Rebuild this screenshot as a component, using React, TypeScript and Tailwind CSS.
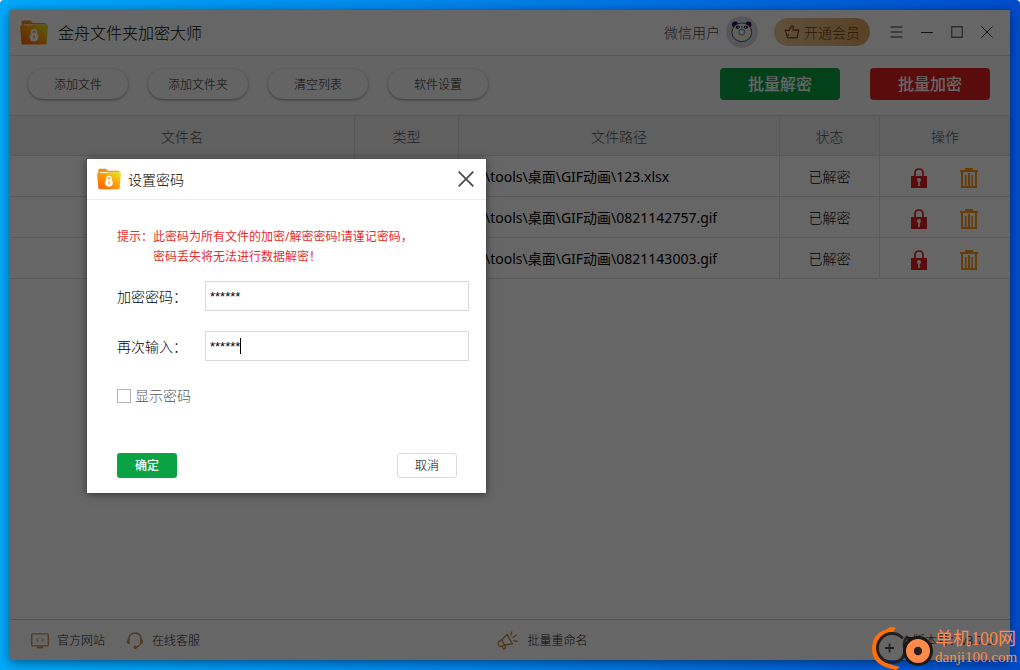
import { useState } from "react";
import type { ReactNode } from "react";

const files = [
  "D:\\tools\\桌面\\GIF动画\\123.xlsx",
  "D:\\tools\\桌面\\GIF动画\\0821142757.gif",
  "D:\\tools\\桌面\\GIF动画\\0821143003.gif",
];

function FolderLogo({ className, id }: { className: string; id: string }) {
  return (
    <svg viewBox="0 0 28 25" className={className} aria-hidden="true">
      <defs>
        <linearGradient id={id} x1="0" y1="1" x2="1" y2="0">
          <stop offset="0" stopColor="#ff5a00" />
          <stop offset="0.5" stopColor="#ff9a0a" />
          <stop offset="1" stopColor="#e0ee20" />
        </linearGradient>
      </defs>
      <path d="M1.5 2 Q1.5 0.5 3 0.5 H10.5 L13 3 H24.5 Q26 3 26 4.5 V9 H1.5 Z" fill="#f08c1c" />
      <path d="M3.5 4.2 H24.5 V8 H3.5 Z" fill="#fff1cc" />
      <path d="M0.1 6.8 Q0 5.5 1.3 5.5 H11 L13.5 4.5 H26.6 Q28 4.5 27.9 6 L26.6 22.8 Q26.4 24.5 25 24.5 H3 Q1.6 24.5 1.5 22.8 Z" fill={`url(#${id})`} />
      <path d="M11.6 14 V12 Q11.6 9.6 14 9.6 Q16.4 9.6 16.4 12 V14" fill="none" stroke="#fff" strokeWidth="1.6" />
      <ellipse cx="14" cy="17" rx="4.4" ry="4.5" fill="#fff" />
      <circle cx="14" cy="16.2" r="0.9" fill="#ff9a0a" />
      <path d="M13.5 16 H14.5 V18.6 H13.5 Z" fill="#ff9a0a" />
    </svg>
  );
}

function Panda() {
  return (
    <svg viewBox="0 0 32 32" className="size-8" aria-hidden="true">
      <circle cx="16" cy="16" r="15.8" fill="#f3c8ce" />
      <circle cx="16" cy="16" r="14.2" fill="#c8e0ec" />
      <circle cx="9" cy="8.5" r="3" fill="#22164a" />
      <circle cx="22.5" cy="8.5" r="3" fill="#22164a" />
      <ellipse cx="15.8" cy="16.3" rx="9.9" ry="9.3" fill="#f8f0e0" stroke="#5a5064" strokeWidth="1" />
      <ellipse cx="11.8" cy="11.2" rx="2.1" ry="1.8" fill="#22164a" />
      <ellipse cx="19.8" cy="11.2" rx="2.1" ry="1.8" fill="#22164a" />
      <circle cx="12.1" cy="11.2" r="0.6" fill="#fff" />
      <circle cx="19.5" cy="11.2" r="0.6" fill="#fff" />
      <circle cx="15.8" cy="16" r="2.8" fill="#fff" stroke="#86a4c4" strokeWidth="1.4" />
      <path d="M14.6 10.4 H17 L15.8 12 Z" fill="#22164a" />
    </svg>
  );
}

function LockIcon() {
  return (
    <svg viewBox="0 0 16 20" className="h-5 w-4" aria-hidden="true">
      <path d="M4 9 V5 Q4 1 8 1 Q12 1 12 5 V9" fill="none" stroke="#e02020" strokeWidth="1.7" />
      <path d="M0 8 H16 V20 H0 Z" fill="#e02020" />
      <circle cx="8" cy="12" r="2" fill="#fff" />
      <path d="M7.2 12 H8.8 V18 H7.2 Z" fill="#fff" />
    </svg>
  );
}

function TrashIcon() {
  return (
    <svg viewBox="0 0 18 20" className="h-5 w-[18px]" aria-hidden="true" fill="#ff9a14">
      <path d="M5 0 H13 V2 H18 V4 H0 V2 H5 Z" />
      <path d="M1 4 H3 V18 H15 V4 H17 V20 H1 Z" />
      <path d="M5 7 H6.6 V18 H5 Z M8 5 H10 V18 H8 Z M11.4 7 H13 V18 H11.4 Z" />
    </svg>
  );
}

function ToolButton({ children }: { children: ReactNode }) {
  return (
    <button className="h-[30px] w-[100px] rounded-full bg-[#f9f9f9] pt-0.5 text-[12px] text-[#222] shadow-[0_1px_3px_rgba(0,0,0,0.4)]">
      {children}
    </button>
  );
}

function TitleBar() {
  return (
    <header className="flex h-[46px] shrink-0 items-center border-b border-[#dedede] bg-white pr-[17px] pb-px pl-2.5">
      <FolderLogo id="logoMain" className="h-[25px] w-7" />
      <h1 className="ml-2.5 pt-0.5 text-[16px] leading-6 text-black">金舟文件夹加密大师</h1>
      <div className="ml-auto flex items-center">
        <span className="text-[14px] text-[#444]">微信用户</span>
        <span className="ml-1.5">
          <Panda />
        </span>
        <button className="ml-4 flex h-7 w-24 items-center justify-center gap-1 rounded-full bg-linear-to-r from-[#edc998] to-[#dba45c] text-[14px] text-[#6b3d0a]">
          <svg viewBox="0 0 16 14" className="h-3.5 w-4" fill="none" stroke="#7a4408" strokeWidth="1.2" strokeLinejoin="round" aria-hidden="true">
            <path d="M3.6 12.8 L1.2 5 L5 5.6 L7.6 1 Q9.2 0.8 9.4 2.2 L9 5.2 L14.8 4.8 L13 12.8 Z" />
            <path d="M4.2 9.2 L5 10.8" />
          </svg>
          开通会员
        </button>
        <div className="ml-5 flex items-center gap-[18px] text-[#777]">
          <button aria-label="菜单">
            <svg viewBox="0 0 13 12" className="h-3 w-[13px]" stroke="currentColor" strokeWidth="1.4" aria-hidden="true">
              <path d="M0.5 1 H12.5 M0.5 6 H12.5 M0.5 11 H12.5" />
            </svg>
          </button>
          <button aria-label="最小化" className="text-[#333]">
            <svg viewBox="0 0 12 12" className="size-3" stroke="currentColor" aria-hidden="true">
              <path d="M0 6.5 H12" />
            </svg>
          </button>
          <button aria-label="最大化">
            <svg viewBox="0 0 12 12" className="size-3" fill="none" stroke="currentColor" strokeWidth="1.4" aria-hidden="true">
              <path d="M0.7 0.7 H11.3 V11.3 H0.7 Z" />
            </svg>
          </button>
          <button aria-label="关闭" className="text-[#333]">
            <svg viewBox="0 0 12 12" className="size-3" stroke="currentColor" strokeWidth="1" aria-hidden="true">
              <path d="M0.5 0.5 L11.5 11.5 M11.5 0.5 L0.5 11.5" />
            </svg>
          </button>
        </div>
      </div>
    </header>
  );
}

function Toolbar() {
  return (
    <div className="flex h-[59px] shrink-0 items-center bg-[#f9f9f9] pr-5 pb-[3px] pl-[18px]">
      <div className="flex gap-5">
        <ToolButton>添加文件</ToolButton>
        <ToolButton>添加文件夹</ToolButton>
        <ToolButton>清空列表</ToolButton>
        <ToolButton>软件设置</ToolButton>
      </div>
      <div className="ml-auto flex gap-[30px] text-[16px] font-medium text-white">
        <button className="h-8 w-[120px] rounded bg-[#0aa344]">批量解密</button>
        <button className="h-8 w-[120px] rounded bg-[#e02020]">批量加密</button>
      </div>
    </div>
  );
}

function FileTable() {
  const head = "border-[#dcdcdc] border-r pt-0.5 font-light last:border-r-0";
  const cell = "border-r border-b border-[#e2e2e2] p-0";
  return (
    <table className="w-full table-fixed border-separate border-spacing-0 text-[14px]">
      <colgroup>
        <col />
        <col className="w-[104px]" />
        <col className="w-[321px]" />
        <col className="w-[100px]" />
        <col className="w-[130px]" />
      </colgroup>
      <thead>
        <tr className="h-[41px] bg-[#efefef] text-[#555] [&>th]:border-y">
          <th className={head}>文件名</th>
          <th className={head}>类型</th>
          <th className={head}>文件路径</th>
          <th className={head}>状态</th>
          <th className={head}>操作</th>
        </tr>
      </thead>
      <tbody className="text-black">
        {files.map((path) => (
          <tr key={path} className="h-[41px]">
            <td className={cell} />
            <td className={cell} />
            <td className={`${cell} pl-3 font-normal whitespace-nowrap`}>{path}</td>
            <td className={`${cell} text-center`}>已解密</td>
            <td className="border-b border-[#e2e2e2] p-0">
              <div className="flex items-center justify-center gap-[33px] pt-1 pr-0.5">
                <button aria-label="加密">
                  <LockIcon />
                </button>
                <button aria-label="删除">
                  <TrashIcon />
                </button>
              </div>
            </td>
          </tr>
        ))}
      </tbody>
    </table>
  );
}

function Footer() {
  return (
    <footer className="flex h-[41px] shrink-0 items-center border-t border-[#d0d0d0] pt-px pr-[17px] pl-[21px] text-[12px] text-[#222]">
      <div className="flex flex-1 gap-[21px]">
        <a href="#site" className="flex items-center gap-2">
          <svg viewBox="0 0 18 16" className="h-4 w-[18px]" fill="none" stroke="#c8904c" strokeWidth="1.4" aria-hidden="true">
            <rect x="0.7" y="0.9" width="16.6" height="12" rx="1.4" />
            <path d="M7.5 4.8 L5.6 6.9 L7.5 9 M10.5 4.8 L12.4 6.9 L10.5 9" strokeWidth="1" />
            <path d="M6 14.4 H12" strokeWidth="2.2" />
          </svg>
          官方网站
        </a>
        <a href="#service" className="flex items-center gap-2">
          <svg viewBox="0 0 18 17" className="h-[17px] w-[18px]" aria-hidden="true">
            <path d="M2.8 8 Q2.8 1 9 1 Q15.2 1 15.2 8 Q15.2 14 10.5 15" fill="none" stroke="#c8904c" strokeWidth="1.3" />
            <path d="M3.7 6.8 V12.2 Q0.8 12 0.8 9.5 Q0.8 7 3.7 6.8 Z M14.3 6.8 V12.2 Q17.2 12 17.2 9.5 Q17.2 7 14.3 6.8 Z" fill="#c8904c" />
            <circle cx="9.3" cy="15.2" r="1.7" fill="#c8904c" />
          </svg>
          在线客服
        </a>
      </div>
      <a href="#rename" className="flex items-center gap-2.5 pl-[60px]">
        <svg viewBox="0 0 21 19" className="h-[19px] w-[21px]" fill="none" stroke="#c8904c" strokeWidth="1.4" strokeLinejoin="round" strokeLinecap="round" aria-hidden="true">
          <path d="M1.2 11.4 L5 8.6 L10 3.4 L15.4 12.8 L8 14 L3.4 15.6 Q0.8 14.4 1.2 11.4 Z" />
          <path d="M4.6 8.8 L7.6 14 M5 15.2 L6.4 18 L8.6 17.2 L7.6 14.4" />
          <path d="M13.8 4 L14.8 1 M16 6.6 L19.2 4 M17 9.8 L20.2 10.2" />
        </svg>
        批量重命名
      </a>
      <span className="flex-1 text-right">版本号：v3.7.0</span>
    </footer>
  );
}

function PasswordDialog() {
  const [first, setFirst] = useState("******");
  const [second, setSecond] = useState("******");
  const [show, setShow] = useState(false);
  const field =
    "h-[30px] w-full border border-[#d9d9d9] bg-white px-1 font-['Liberation_Sans',sans-serif] text-[13px] text-black outline-none";
  return (
    <section
      role="dialog"
      aria-labelledby="dialogTitle"
      className="absolute top-[149px] left-[77px] w-[399px] bg-white pb-[15px] shadow-[0_1px_8px_rgba(0,0,0,0.5)]"
    >
      <div className="flex h-[41px] items-center border-b border-[#ebebeb] pr-3 pl-2.5">
        <FolderLogo id="logoDialog" className="h-[22px] w-6" />
        <h2 id="dialogTitle" className="ml-[7px] text-[14px] text-black">
          设置密码
        </h2>
        <button aria-label="关闭" className="ml-auto">
          <svg viewBox="0 0 16 16" className="size-4" stroke="#4c4c4c" strokeWidth="1.8" aria-hidden="true">
            <path d="M0.7 0.7 L15.3 15.3 M15.3 0.7 L0.7 15.3" />
          </svg>
        </button>
      </div>
      <form className="pt-[27px] pr-[29px] pl-[30px]" onSubmit={(e) => e.preventDefault()}>
        <div className="flex text-[12px] leading-5 font-normal text-[#e62e2e]">
          <span className="w-9 shrink-0">提示：</span>
          <p>
            此密码为所有文件的加密/解密密码!请谨记密码，
            <br />
            密码丢失将无法进行数据解密！
          </p>
        </div>
        <div className="-mr-3 mt-3.5 grid grid-cols-[88px_1fr] items-center gap-y-5 text-[14px] text-black">
          <label htmlFor="pwd">加密密码：</label>
          <input id="pwd" className={field} value={first} onChange={(e) => setFirst(e.target.value)} />
          <label htmlFor="pwdAgain">再次输入：</label>
          <div className="relative">
            <input id="pwdAgain" className={field} value={second} onChange={(e) => setSecond(e.target.value)} />
            <span className="absolute top-[7px] left-[35px] h-4 w-px bg-black" />
          </div>
        </div>
        <label className="mt-[25px] flex items-center gap-1 text-[14px] leading-5 text-[#555]">
          <input
            type="checkbox"
            checked={show}
            onChange={(e) => setShow(e.target.checked)}
            className="size-3.5 appearance-none border border-[#b4b4b4] bg-white checked:bg-[#0aa344]"
          />
          显示密码
        </label>
        <div className="mt-[47px] flex justify-between text-[12px]">
          <button type="submit" className="h-[25px] w-[60px] rounded-[3px] bg-[#0aa344] font-medium text-white">
            确定
          </button>
          <button type="button" className="h-[25px] w-[60px] rounded-[3px] border border-[#d9d9d9] bg-white text-black">
            取消
          </button>
        </div>
      </form>
    </section>
  );
}

function SiteBadge() {
  return (
    <div className="absolute right-0 bottom-0 flex items-center font-normal text-[#ff8c50]">
      <svg viewBox="0 0 64 44" className="h-11 w-16" aria-hidden="true">
        <path d="M21 2 Q1 5 1 23 Q1 40 25 44 L29 41 Q7 37 8 21 Q9 9 19 6 Z" fill="#ff6f0a" />
        <path d="M13 6 Q18 -1 25 2 L22 6 Z" fill="#ff6f0a" />
        <path d="M31 11.5 A14.5 14.5 0 1 0 31 32.5 Q35 28 33.5 22 Q32 15 36 11" fill="none" stroke="#262020" strokeWidth="3" strokeLinecap="round" />
        <path d="M14 22 H23 M18.5 17.5 V26.5" stroke="#262020" strokeWidth="1.8" />
        <path d="M36 11 L45 11 L37 18 Z" fill="#1c1614" />
        <circle cx="47" cy="25" r="13.5" fill="#ff8b4a" stroke="#1c1614" strokeWidth="3" />
        <circle cx="47" cy="25" r="4.2" fill="#262020" />
      </svg>
      <div className="w-[85px] whitespace-nowrap">
        <div className="font-['Liberation_Serif','Noto_Sans_CJK_SC',serif] text-[18px] leading-[19px]">单机100网</div>
        <div className="font-['Liberation_Serif',serif] text-[15px] leading-[17px]">danji100.com</div>
      </div>
    </div>
  );
}

export default function App() {
  return (
    <div className="relative flex min-h-screen rounded-t-[4px] bg-linear-to-r from-[#00a8fa] via-[#0084ec] via-45% to-[#004ccc] p-2.5 font-['Noto_Sans','Noto_Sans_CJK_SC',sans-serif] font-light">
      <div className="relative flex min-w-0 flex-1 flex-col bg-white shadow-[0_2px_10px_rgba(0,0,0,0.5)]">
        <TitleBar />
        <Toolbar />
        <main className="flex-1">
          <FileTable />
        </main>
        <Footer />
        <div className="absolute inset-0 bg-black/60" />
        <PasswordDialog />
      </div>
      <SiteBadge />
    </div>
  );
}
